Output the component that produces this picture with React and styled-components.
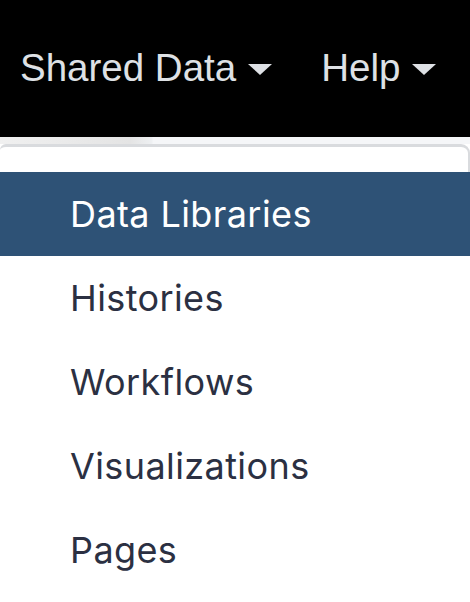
import React from "react";
import styled, { createGlobalStyle } from "styled-components";

const Global = createGlobalStyle`
  html, body { margin: 0; padding: 0; background: #ffffff; }
  body { width: 470px; height: 602px; overflow: hidden; }
`;

const Page = styled.div`
  width: 470px;
  height: 602px;
  display: flex;
  flex-direction: column;
  background: #ffffff;
  font-family: "Liberation Sans", Arial, sans-serif;
`;

const NavBar = styled.nav`
  height: 137px;
  background: #000000;
  display: flex;
  align-items: center;
  padding-left: 20px;
  gap: 49px;
  flex-shrink: 0;
`;

const NavItem = styled.div`
  display: flex;
  align-items: center;
  gap: 12px;
  color: #dee1e5;
  font-size: 38.5px;
  line-height: 1;
  padding-bottom: 1px;
`;

const Caret = styled.span`
  width: 0;
  height: 0;
  border-left: 12px solid transparent;
  border-right: 12px solid transparent;
  border-top: 11px solid #dee1e5;
  margin-top: 2px;
`;

const Strip = styled.div`
  height: 7px;
  flex-shrink: 0;
  background: linear-gradient(to right, #f0f0f0 0px, #e4e4e4 130px, #eef0f2 152px, #f5f6f8 153px, #f5f6f8 100%);
`;

const Menu = styled.div`
  flex: 1;
  display: flex;
  flex-direction: column;
  background: #ffffff;
`;

const MenuCap = styled.div`
  height: 25px;
  flex-shrink: 0;
  border-top: 3px solid #d9dbde;
  border-right: 2px solid #d9dbde;
  border-radius: 6px 9px 0 0;
  margin-top: 0;
  box-sizing: border-box;
  height: 28px;
`;

const List = styled.ul`
  list-style: none;
  margin: 0;
  padding: 0;
  display: flex;
  flex-direction: column;
`;

const MenuItem = styled.li`
  height: 84px;
  display: flex;
  align-items: center;
  padding-left: 70px;
  font-family: Inter, "Liberation Sans", sans-serif;
  font-size: 36px;
  letter-spacing: 0.4px;
  color: ${(p) => (p.$active ? "#ffffff" : "#2b3042")};
  background: ${(p) => (p.$active ? "#2e5276" : "transparent")};
`;

const items = ["Data Libraries", "Histories", "Workflows", "Visualizations", "Pages"];

export default function App() {
  return (
    <>
      <Global />
      <Page>
        <NavBar>
          <NavItem>
            Shared Data <Caret />
          </NavItem>
          <NavItem>
            Help <Caret />
          </NavItem>
        </NavBar>
        <Strip />
        <Menu>
          <MenuCap />
          <List>
            {items.map((it, i) => (
              <MenuItem key={it} $active={i === 0}>
                {it}
              </MenuItem>
            ))}
          </List>
        </Menu>
      </Page>
    </>
  );
}
